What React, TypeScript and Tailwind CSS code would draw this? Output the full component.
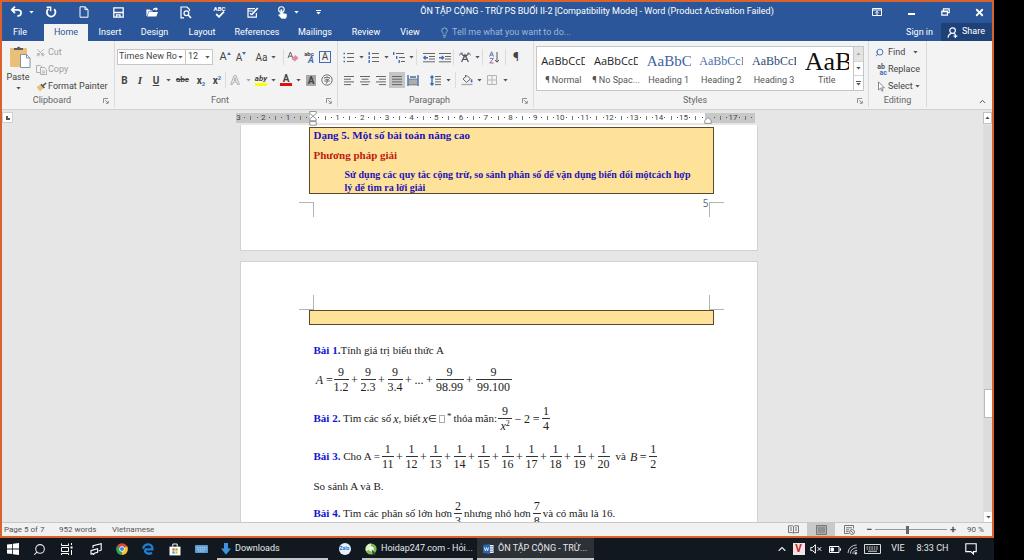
import React from "react";
import { ChevronUp, Search, Scissors, Lightbulb, X } from "lucide-react";

type Kids = { children?: React.ReactNode };

/* ---------- small building blocks ---------- */

function Caret({ className = "text-[#555]" }: { className?: string }) {
  return (
    <svg viewBox="0 0 5 3" className={`h-[3px] w-[5px] shrink-0 ${className}`} fill="currentColor" aria-hidden="true">
      <path d="M0.3 0H4.7L2.5 2.6Z" />
    </svg>
  );
}

function Cell({ w, label, children, on = false }: Kids & { w: string; label: string; on?: boolean }) {
  return (
    <button
      type="button"
      aria-label={label}
      className={`flex h-4 shrink-0 items-center justify-center ${w} ${on ? "bg-[#c5c5c5]" : ""}`}
    >
      {children}
    </button>
  );
}

function Rule() {
  return <span className="h-4 w-px shrink-0 bg-[#dcdcdc]" />;
}

function Group({ title, w, launcher = true, children }: Kids & { title: string; w: string; launcher?: boolean }) {
  return (
    <section aria-label={title} className={`flex shrink-0 flex-col border-r border-[#dadada] ${w}`}>
      <div className="h-[54px]">{children}</div>
      <div className="flex h-3 items-center">
        <span className="flex-1 text-center text-[#666]">{title}</span>
        {launcher ? (
          <button type="button" aria-label={`${title} settings`} className="mr-1 flex h-2 w-2 items-center justify-center">
            <svg viewBox="0 0 6 6" className="h-[6px] w-[6px]" fill="none" stroke="#777" strokeWidth="0.8">
              <path d="M0.5 5V0.5H5M2.2 2.2L5 5M5.3 2.8V5.3H2.8" />
            </svg>
          </button>
        ) : null}
      </div>
    </section>
  );
}

/* ---------- title bar ---------- */

function TitleBar() {
  return (
    <header className="flex h-5 items-center bg-[#2b579a] text-white">
      <div className="flex items-center">
        <button type="button" aria-label="Undo" className="flex w-[32px] items-center gap-1.5 pl-2">
          <svg viewBox="0 0 13 12" className="h-3 w-[13px] shrink-0" fill="none" stroke="#fff" strokeWidth="1.8">
            <path d="M5 0.6L1.8 3.8L5 7M2 3.8H8C12.4 4 12 10 7.4 10" />
          </svg>
          <Caret className="text-white" />
        </button>
        <button type="button" aria-label="Repeat" className="flex w-[33px] items-center justify-center">
          <svg viewBox="0 0 12 12" className="h-3 w-3" fill="none" stroke="#fff" strokeWidth="1.8">
            <path d="M9.2 3.2A4.3 4.3 0 1 1 3.6 2.8" />
            <path d="M1.6 1.2H5.6V5.2" strokeWidth="1.5" />
          </svg>
        </button>
        <button type="button" aria-label="New" className="flex w-[34px] items-center justify-center">
          <svg viewBox="0 0 10 12" className="h-3 w-[10px]" fill="none" stroke="#fff" strokeWidth="1">
            <path d="M1 0.8H6L9 3.6V11.2H1ZM6 0.8V3.6H9" />
          </svg>
        </button>
        <button type="button" aria-label="Save" className="flex w-[34px] items-center justify-center">
          <svg viewBox="0 0 11 11" className="h-[11px] w-[11px]" fill="none" stroke="#fff" strokeWidth="1.3">
            <path d="M0.8 0.8H10.2V10.2H0.8ZM0.8 5.5H10.2M3.5 10V7.8H7V10" />
          </svg>
        </button>
        <button type="button" aria-label="Open" className="flex w-[34px] items-center justify-center">
          <svg viewBox="0 0 12 10" className="h-[10px] w-3" fill="#fff">
            <path d="M0.4 9V2.4H3.6L4.6 3.4H6.4V4.4H2.4L0.8 9ZM2.8 5H12L10.4 9.6H1.2ZM7 2.2C7.6 1 8.8 0.8 9.8 1.2V0L12 2L9.8 4V2.8C8.8 2.4 8 2.6 7 3.2Z" />
          </svg>
        </button>
        <button type="button" aria-label="Print preview" className="flex w-[34px] items-center justify-center">
          <svg viewBox="0 0 12 13" className="h-[13px] w-3" fill="none" stroke="#fff" strokeWidth="1.2">
            <path d="M4 11.8H1V1H7L9.5 3.5V5" />
            <circle cx="6.4" cy="7.2" r="2.4" />
            <path d="M8.2 9L11 12" strokeWidth="1.6" />
          </svg>
        </button>
        <button type="button" aria-label="Spelling" className="flex w-[33px] flex-col items-center justify-center">
          <span className="text-[6px] leading-[5px] font-bold">ABC</span>
          <svg viewBox="0 0 10 7" className="h-[7px] w-[10px]" fill="none" stroke="#fff" strokeWidth="1.8">
            <path d="M1.2 3L4 5.8L9 0.6" />
          </svg>
        </button>
        <button type="button" aria-label="Edit" className="flex w-[33px] items-center justify-center">
          <svg viewBox="0 0 12 11" className="h-[11px] w-3" fill="none" stroke="#fff" strokeWidth="1.2">
            <path d="M8 1.6H1V10.2H9.4V6M1 4H6M3 6L4.4 7.8" />
            <path d="M4.4 8L10.8 1" strokeWidth="1.8" />
          </svg>
        </button>
        <button type="button" aria-label="Touch mode" className="flex w-[34px] items-center justify-end gap-1.5 pr-1">
          <svg viewBox="0 0 11 13" className="h-[13px] w-[11px] shrink-0" fill="none" stroke="#fff">
            <circle cx="4.4" cy="3.6" r="2.8" strokeWidth="1.1" />
            <path d="M4.4 3.4V9" strokeWidth="1.9" />
            <path d="M3.6 6.6L9.6 8.2V10.6L8.6 12.6H4.6L1.4 9L2.4 8.2L3.6 9Z" fill="#fff" strokeWidth="0.4" />
          </svg>
          <Caret className="text-white" />
        </button>
        <button type="button" aria-label="Customize toolbar" className="flex w-[27px] flex-col items-center gap-px pl-1">
          <span className="h-px w-[5px] bg-white" />
          <Caret className="text-white" />
        </button>
      </div>
      <h1 className="min-w-0 flex-1 truncate text-center text-[9px]">
        ÔN TẬP CỘNG - TRỪ PS BUỔI II-2 [Compatibility Mode] - Word (Product Activation Failed)
      </h1>
      <div className="flex gap-2">
        <button type="button" aria-label="Ribbon display options" className="flex w-[26px] items-center justify-center">
          <svg viewBox="0 0 10 8" className="h-2 w-[10px]" fill="none" stroke="#fff" strokeWidth="1">
            <path d="M0.5 0.5H9.5V7.5H0.5ZM0.5 2H9.5M5 7V3.6M3.3 5L5 3.4L6.7 5" />
          </svg>
        </button>
        <button type="button" aria-label="Minimize" className="flex w-[26px] items-center justify-center">
          <span className="mt-1 h-[2px] w-[7px] bg-white" />
        </button>
        <button type="button" aria-label="Restore" className="flex w-[26px] items-center justify-center">
          <svg viewBox="0 0 9 8" className="h-2 w-[9px]" fill="none" stroke="#fff" strokeWidth="1.2">
            <path d="M2.5 2.6V0.8H8.2V4.6H6.6M0.8 3H6.4V7.2H0.8ZM0.8 3.6H6.4" />
          </svg>
        </button>
        <button type="button" aria-label="Close" className="flex w-[26px] items-center justify-center">
          <X size={11} strokeWidth={4} />
        </button>
      </div>
    </header>
  );
}

const tabs = [
  { name: "File", w: "mr-1.5 w-9" },
  { name: "Home", w: "w-11" },
  { name: "Insert", w: "w-11" },
  { name: "Design", w: "w-[45px]" },
  { name: "Layout", w: "w-[50px]" },
  { name: "References", w: "w-[60px]" },
  { name: "Mailings", w: "w-14" },
  { name: "Review", w: "w-[46px]" },
  { name: "View", w: "w-[42px]" },
];

function TabRow() {
  return (
    <nav className="flex h-[19px] items-stretch bg-[#2b579a] pt-0.5 text-[9px] text-white">
      {tabs.map((t) => (
        <button
          key={t.name}
          type="button"
          className={`${t.w} shrink-0 ${t.name === "Home" ? "bg-[#f3f3f3] text-[#2b579a]" : ""}`}
        >
          {t.name}
        </button>
      ))}
      <label className="flex flex-1 items-center gap-0.5 pl-2 text-[#9fb6db]">
        <Lightbulb size={11} strokeWidth={2} />
        <input
          aria-label="Tell me what you want to do"
          placeholder="Tell me what you want to do..."
          className="w-40 bg-transparent outline-none placeholder:text-[#9fb6db]"
        />
      </label>
      <button type="button" className="px-2">Sign in</button>
      <button type="button" className="-mt-px flex w-[51px] items-center gap-1 bg-[#1e4278] pl-1.5">
        <svg viewBox="0 0 11 11" className="h-[11px] w-[11px]" fill="none" stroke="#fff" strokeWidth="1.2">
          <circle cx="5.6" cy="3.6" r="2.8" />
          <path d="M1 10.6C1.2 8 2.6 6.8 4.4 6.2M7 6.6L8.4 7.6M8.4 7.4V11M6.6 9.2H10.4" />
        </svg>
        Share
      </button>
    </nav>
  );
}

/* ---------- ribbon ---------- */

function Clipboard() {
  return (
    <Group title="Clipboard" w="w-[113px]">
      <div className="flex">
        <button type="button" className="flex w-8 flex-col items-center pt-1">
          <svg viewBox="0 0 22 24" className="ml-1 h-6 w-[22px]">
            <rect x="1" y="3" width="17" height="19" rx="1" fill="#eac079" />
            <path d="M5 5V3H8A1.8 1.8 0 0 1 11.4 3H14V5Z" fill="#5c5c5c" />
            <path d="M11.5 9.5H17.5L21 13V22.5H11.5Z" fill="#fff" stroke="#8492a6" />
            <path d="M17.5 9.5V13H21" fill="none" stroke="#8492a6" />
          </svg>
          <span className="mt-0.5 leading-3">Paste</span>
          <span className="mt-1"><Caret /></span>
        </button>
        <div className="flex flex-col pt-[3px] pl-0.5">
          <button type="button" className="flex h-[17px] items-center gap-[3px] text-[#a0a0a0]">
            <Scissors size={9} className="-rotate-90" strokeWidth={2} />
            Cut
          </button>
          <button type="button" className="flex h-[17px] items-center gap-px text-[#a0a0a0]">
            <svg viewBox="0 0 11 10" className="h-[10px] w-[11px]" fill="#f3f3f3" stroke="#b0b0b0" strokeWidth="1">
              <path d="M0.5 0.5H4.5L6.5 2.5V7.5H0.5Z" />
              <path d="M4.5 2.5H8.5L10.5 4.5V9.5H4.5ZM6 6H9M6 7.8H9" />
            </svg>
            Copy
          </button>
          <button type="button" className="flex h-[17px] items-center gap-px whitespace-nowrap">
            <svg viewBox="0 0 11 10" className="h-[10px] w-[11px] shrink-0">
              <path d="M0.5 5L4.5 2.5L7.5 6L4 9.6Z" fill="#eac079" />
              <path d="M5 2.2L8.4 6M7.2 3.4L10.2 1" stroke="#555" strokeWidth="1.6" />
            </svg>
            Format Painter
          </button>
        </div>
      </div>
    </Group>
  );
}

function FontGroup() {
  return (
    <Group title="Font" w="w-[223px]">
      <div className="flex flex-col gap-[7px] pt-2 pl-0.5">
        <div className="flex h-4 items-center">
          <div className="relative flex h-4 w-[69px] items-center border border-[#c6c6c6] bg-white">
            <select aria-label="Font family" className="w-full appearance-none bg-transparent pl-px outline-none">
              <option>Times New Ro</option>
            </select>
            <span className="pointer-events-none absolute right-0.5"><Caret /></span>
          </div>
          <div className="relative -ml-px flex h-4 w-7 items-center border border-[#c6c6c6] bg-white">
            <select aria-label="Font size" className="w-full appearance-none bg-transparent pl-0.5 outline-none">
              <option>12</option>
            </select>
            <span className="pointer-events-none absolute right-0.5"><Caret /></span>
          </div>
          <Cell w="ml-1 w-4" label="Grow font">
            <span className="text-[11px]">A</span>
            <svg viewBox="0 0 4 3" className="mb-2 h-[3px] w-1" fill="#3f6db3"><path d="M0 3L2 0L4 3Z" /></svg>
          </Cell>
          <Cell w="w-4" label="Shrink font">
            <span className="text-[10px]">A</span>
            <svg viewBox="0 0 4 3" className="mb-2 h-[3px] w-1" fill="#3f6db3"><path d="M0 0L2 3L4 0Z" /></svg>
          </Cell>
          <Cell w="w-[34px] gap-1" label="Change case">
            <span className="text-[10px]">Aa</span>
            <Caret />
          </Cell>
          <Rule />
          <Cell w="w-[17px]" label="Clear formatting">
            <svg viewBox="0 0 12 12" className="h-3 w-3">
              <path d="M1 7L3.4 1L5.8 7M1.8 5.2H5" fill="none" stroke="#555" strokeWidth="0.9" />
              <path d="M4.5 8L8.5 4L11.5 7L8 10.6Z" fill="#e28a9c" />
            </svg>
          </Cell>
          <Cell w="w-4" label="Phonetic guide">
            <span className="flex flex-col items-center">
              <span className="text-[6px] leading-[5px] font-bold">abc</span>
              <span className="pl-1 text-[9px] leading-[8px] font-bold text-[#3f6db3] italic">A</span>
            </span>
          </Cell>
          <Cell w="w-4" label="Character border">
            <span className="flex h-3 w-3 items-center justify-center border border-[#3f6db3] text-[10px] leading-none">A</span>
          </Cell>
        </div>
        <div className="flex h-4 items-center text-[10px] font-bold">
          <Cell w="w-[15px]" label="Bold">B</Cell>
          <Cell w="w-4" label="Italic"><span className="font-['Liberation_Serif',serif] text-[11px] italic">I</span></Cell>
          <Cell w="w-4" label="Underline"><span className="underline">U</span></Cell>
          <Cell w="w-2" label="Underline style"><Caret /></Cell>
          <Cell w="w-[21px]" label="Strikethrough"><span className="text-[8px] line-through">abc</span></Cell>
          <Cell w="w-4" label="Subscript">x<span className="mt-1.5 text-[6px] text-[#3f6db3]">2</span></Cell>
          <Cell w="w-4" label="Superscript">x<span className="mb-1.5 text-[6px] text-[#3f6db3]">2</span></Cell>
          <Rule />
          <Cell w="ml-0.5 w-[25px] gap-1.5" label="Text effects">
            <svg viewBox="0 0 10 10" className="h-[10px] w-[10px]" fill="none" stroke="#b0b0b0" strokeWidth="1">
              <path d="M0.6 9.4L4 0.6H6L9.4 9.4H7.4L6.6 7H3.4L2.6 9.4ZM4 5.4H6L5 2.6Z" />
            </svg>
            <Caret className="text-[#aaa]" />
          </Cell>
          <Cell w="w-[25px] gap-1" label="Highlight colour">
            <span className="flex flex-col items-center border-b-[3px] border-[#ffff00]">
              <span className="text-[8px] leading-[8px] italic">aby</span>
            </span>
            <Caret />
          </Cell>
          <Cell w="w-[25px] gap-1" label="Font colour">
            <span className="flex w-3 justify-center border-b-[3px] border-[#e01010] text-[10px] leading-[9px]">A</span>
            <Caret />
          </Cell>
          <Cell w="w-4" label="Character shading"><span className="bg-[#a8a8a8] px-0.5 leading-[11px]">A</span></Cell>
          <Cell w="w-4" label="Enclose characters">
            <svg viewBox="0 0 12 12" className="h-3 w-3" fill="none" stroke="#666" strokeWidth="0.9">
              <circle cx="6" cy="6" r="5.2" />
              <path d="M6 2.2V3.4M3.4 4.6V3.6H8.6V4.6M4.2 5.4H7.6L6 6.6V9L5 9.2M3.2 7H8.8" />
            </svg>
          </Cell>
        </div>
      </div>
    </Group>
  );
}

function Lines({ d, accent }: { d: string; accent?: string }) {
  return (
    <svg viewBox="0 0 12 11" className="h-[11px] w-3 shrink-0" fill="none" strokeWidth="1">
      <path d={d} stroke="#666" />
      {accent ? <path d={accent} stroke="#3f6db3" strokeWidth="1.4" /> : null}
    </svg>
  );
}

function Paragraph() {
  return (
    <Group title="Paragraph" w="w-[196px]">
      <div className="flex flex-col gap-[7px] pt-2 pl-[3px]">
        <div className="flex h-4 items-center">
          <Cell w="w-[25px] gap-1" label="Bullets">
            <Lines d="M4 1.5H11M4 5.5H11M4 9.5H11" accent="M0.5 1.5H2M0.5 5.5H2M0.5 9.5H2" />
            <Caret />
          </Cell>
          <Cell w="w-[25px] gap-1" label="Numbering">
            <Lines d="M4 1.5H11M4 5.5H11M4 9.5H11" accent="M1.2 0V3M1.2 4V7M1.2 8V11" />
            <Caret />
          </Cell>
          <Cell w="w-[25px] gap-1" label="Multilevel list">
            <Lines d="M3 1.5H11M6 5.5H12M8 9.5H12" accent="M0.7 0V3M3.7 4V7M6.2 8V11" />
            <Caret />
          </Cell>
          <Rule />
          <Cell w="ml-1 w-4" label="Decrease indent">
            <Lines d="M0 1.5H12M6 4.5H12M6 7H12M0 9.8H12" accent="M5 5.7H1M2.6 4L0.9 5.7L2.6 7.4" />
          </Cell>
          <Cell w="w-4" label="Increase indent">
            <Lines d="M0 1.5H12M6 4.5H12M6 7H12M0 9.8H12" accent="M0 5.7H4.4M2.8 4L4.5 5.7L2.8 7.4" />
          </Cell>
          <Rule />
          <Cell w="ml-0.5 w-[26px] gap-1" label="Asian layout">
            <svg viewBox="0 0 12 11" className="h-[11px] w-3" fill="none" stroke="#555" strokeWidth="1.2">
              <path d="M2.6 10L6 2.6L9.4 10M3.8 7.4H8.2M6 5L2 1.4M6 5L10 1.4" />
              <path d="M0.4 3.6L1.6 1L4 1.2M11.6 3.6L10.4 1L8 1.2" strokeWidth="0.8" stroke="#3f6db3" />
            </svg>
            <Caret />
          </Cell>
          <Rule />
          <Cell w="w-[22px]" label="Sort">
            <svg viewBox="0 0 10 13" className="h-[13px] w-[10px]" fill="none">
              <path d="M0.6 5.6L2.6 0.8L4.6 5.6M1.4 4H3.8" stroke="#3f6db3" strokeWidth="0.9" />
              <path d="M0.8 7.4H4.4L0.8 12H4.6" stroke="#8b5aa8" strokeWidth="0.9" />
              <path d="M8 1V11M6 9L8 11.2L10 9" stroke="#555" />
            </svg>
          </Cell>
          <Rule />
          <Cell w="w-5" label="Show marks"><span className="text-[12px]">¶</span></Cell>
        </div>
        <div className="flex h-4 items-center">
          <Cell w="w-4" label="Align left"><Lines d="M1 1.5H11M1 4.2H8M1 6.9H11M1 9.6H8" /></Cell>
          <Cell w="w-4" label="Align centre"><Lines d="M1 1.5H11M2.5 4.2H9.5M1 6.9H11M2.5 9.6H9.5" /></Cell>
          <Cell w="w-4" label="Align right"><Lines d="M1 1.5H11M4 4.2H11M1 6.9H11M4 9.6H11" /></Cell>
          <Cell w="w-4" label="Justify" on><Lines d="M1 1.5H11M1 4.2H11M1 6.9H11M1 9.6H11" /></Cell>
          <Cell w="w-4" label="Distribute">
            <Lines d="M1.5 4.2H10.5M1.5 6H10.5M1.5 8H10.5M1.5 9.8H10.5" accent="M1 0V11M11 0V11M3 2H9" />
          </Cell>
          <span className="ml-1"><Rule /></span>
          <Cell w="w-[30px] gap-1" label="Line spacing">
            <Lines d="M5 1.5H11M5 4.2H11M5 6.9H11M5 9.6H11" accent="M2 1V10M0.5 2.8L2 1L3.5 2.8M0.5 8.2L2 10L3.5 8.2" />
            <Caret />
          </Cell>
          <Rule />
          <Cell w="ml-0.5 w-[26px] gap-1" label="Shading">
            <svg viewBox="0 0 12 12" className="h-3 w-3" fill="none" stroke="#666">
              <path d="M2 5L6 1.5L9.5 5L5.5 8.4ZM4.5 3V1" />
              <path d="M10.6 5.4V8.4" stroke="#3f6db3" strokeWidth="1.6" />
              <path d="M0.5 10.5H11.5" strokeWidth="1.4" stroke="#aaa" />
            </svg>
            <Caret />
          </Cell>
          <Cell w="w-[26px] gap-1.5" label="Borders">
            <svg viewBox="0 0 10 10" className="h-[10px] w-[10px]" fill="none" stroke="#b5b5b5">
              <path d="M0.5 0.5H9.5V9.5H0.5ZM5 0.5V9.5M0.5 5H9.5" />
            </svg>
            <Caret />
          </Cell>
        </div>
      </div>
    </Group>
  );
}

const styleItems = [
  { name: "¶ Normal", sample: "AaBbCcD", look: "font-['Open_Sans',sans-serif] text-[11px] text-[#222]" },
  { name: "¶ No Spac...", sample: "AaBbCcD", look: "font-['Open_Sans',sans-serif] text-[11px] text-[#222]" },
  { name: "Heading 1", sample: "AaBbC", look: "font-['Liberation_Serif',serif] text-[15px] text-[#3c62a0]" },
  { name: "Heading 2", sample: "AaBbCcI", look: "font-['Liberation_Serif',serif] text-[12px] text-[#4a6fa8]" },
  { name: "Heading 3", sample: "AaBbCcI", look: "font-['Liberation_Serif',serif] text-[12px] text-[#2c4874]" },
  { name: "Title", sample: "AaB", look: "font-['Liberation_Serif',serif] text-[26px] text-[#111]" },
];

function Styles() {
  return (
    <Group title="Styles" w="w-[335px]">
      <div className="flex h-[50px] pt-[5px] pr-1 pl-0.5">
        <div className="flex min-w-0 flex-1 border border-[#c6c6c6] bg-white">
          {styleItems.map((s) => (
            <button key={s.name} type="button" className="flex min-w-0 flex-1 flex-col items-center overflow-hidden pt-[3px]">
              <span className={`flex h-[22px] w-11 items-center overflow-hidden whitespace-nowrap ${s.look}`}>{s.sample}</span>
              <span className="mt-0.5 whitespace-nowrap text-[#555]">{s.name}</span>
            </button>
          ))}
          <div className="flex w-[10px] flex-col border-l border-[#c6c6c6]">
            <button type="button" aria-label="Previous styles" className="flex flex-1 items-center justify-center bg-[#e4e4e4]">
              <span className="rotate-180"><Caret className="text-[#aaa]" /></span>
            </button>
            <button type="button" aria-label="Next styles" className="flex flex-1 items-center justify-center border-y border-[#d5d5d5]">
              <Caret />
            </button>
            <button type="button" aria-label="More styles" className="flex flex-1 flex-col items-center justify-center gap-px">
              <span className="h-px w-[5px] bg-[#555]" />
              <Caret />
            </button>
          </div>
        </div>
      </div>
    </Group>
  );
}

function Editing() {
  return (
    <Group title="Editing" w="w-[58px]" launcher={false}>
      <div className="flex flex-col pt-[3px] pl-1.5">
        <button type="button" className="flex h-[17px] items-center gap-1">
          <Search size={9} className="-scale-x-100 text-[#3f6db3]" strokeWidth={2.5} />
          <span>Find</span>
          <span className="ml-1"><Caret /></span>
        </button>
        <button type="button" className="flex h-[17px] items-center gap-px">
          <span className="flex w-3 flex-col text-[7px] leading-[6px] font-bold">
            <span className="text-[#555]">ab</span>
            <span className="text-right text-[#3f6db3]">ac</span>
          </span>
          Replace
        </button>
        <button type="button" className="flex h-[17px] items-center gap-px">
          <svg viewBox="0 0 11 11" className="h-[11px] w-3 shrink-0" fill="#fff" stroke="#888">
            <path d="M3 0.8V9L5 7.2L6.4 10.2L7.6 9.6L6.2 6.8H8.8Z" />
          </svg>
          <span className="mr-px">Select</span>
          <Caret />
        </button>
      </div>
    </Group>
  );
}

/* ---------- ruler ---------- */

function Ruler() {
  const marks = Array.from({ length: 21 }, (_, i) => i - 3);
  return (
    <div className="flex h-[15px] items-center bg-[#e6e6e6]">
      <div className="flex h-[11px] w-[11px] items-center justify-center border border-[#cfcfcf] bg-white">
        <span className="h-1 w-1 border-b-2 border-l-2 border-[#555]" />
      </div>
      <div className="flex flex-1 justify-center pr-1.5">
        <div className="relative flex h-[10px] w-[519px] text-[8px] leading-[10px] text-[#444]">
          {marks.map((n) => (
            <div key={n} className={`flex min-w-0 flex-1 items-center ${n < 0 || n > 15 ? "bg-[#c8c8c8]" : "bg-white"}`}>
              <span className="flex w-1/4 justify-center whitespace-nowrap">{n === 0 || n === 16 ? "" : Math.abs(n)}</span>
              <span className="flex w-1/4 justify-center"><span className="h-px w-px bg-[#555]" /></span>
              <span className="flex w-1/4 justify-center"><span className="h-1 w-px bg-[#777]" /></span>
              <span className="flex w-1/4 justify-center"><span className="h-px w-px bg-[#555]" /></span>
            </div>
          ))}
          <svg viewBox="0 0 8 15" className="absolute -top-0.5 left-[73px] h-[15px] w-2" fill="#fff" stroke="#888" strokeWidth="0.9">
            <path d="M0.8 0.5H7.2V2.5L4 5.2L0.8 2.5ZM4 5.2L7.2 8V9.8H0.8V8ZM0.8 10.6H7.2V14.2H0.8Z" />
          </svg>
          <svg viewBox="0 0 8 7" className="absolute top-1 right-[43px] h-[7px] w-2" fill="#fff" stroke="#888" strokeWidth="0.9">
            <path d="M4 0.6L7.2 3.4V6.4H0.8V3.4Z" />
          </svg>
        </div>
      </div>
      <div className="flex h-3 w-[9px] items-center justify-center border border-[#c0c0c0] bg-white">
        <span className="rotate-180"><Caret /></span>
      </div>
    </div>
  );
}

/* ---------- document ---------- */

function Frac({ n, d, w = "" }: { n: React.ReactNode; d: React.ReactNode; w?: string }) {
  return (
    <span className={`inline-flex shrink-0 flex-col items-center text-[12px] leading-[14px] ${w}`}>
      <span>{n}</span>
      <span className="h-px w-full bg-[#333]" />
      <span>{d}</span>
    </span>
  );
}

function Op({ children }: Kids) {
  return <span className="w-3 shrink-0 text-center text-[12px]">{children}</span>;
}

function Term({ children }: Kids) {
  return <b className="text-[#1414d0]">{children}</b>;
}

function CropMarks({ side }: { side: "top" | "bottom" }) {
  const edge = side === "top" ? "border-b" : "border-t";
  return (
    <div className="flex h-[15px] justify-between pr-[33px] pl-[58px]">
      <span className={`w-[15px] border-r border-[#b4b4b4] ${edge}`} />
      <span className={`w-[15px] border-l border-[#b4b4b4] ${edge}`} />
    </div>
  );
}

const denominators = [11, 12, 13, 14, 15, 16, 17, 18, 19, 20];

function Document() {
  return (
    <main className="flex min-h-0 flex-1 bg-[#e6e6e6]">
      <div className="w-3 shrink-0" />
      <div className="flex min-w-0 flex-1 flex-col items-center gap-[10px] overflow-hidden font-['Liberation_Serif',serif] text-[11px] whitespace-nowrap text-[#222]">
        <article className="flex h-[126px] w-[518px] shrink-0 flex-col border border-t-0 border-[#d2d2d2] bg-white pt-0.5">
          <div className="mr-[43px] ml-[68px] h-[67px] border border-[#5a4a28] bg-[#ffe29a] pl-1 font-bold text-[#1d13b8]">
            <p className="leading-[14px]">Dạng 5. Một số bài toán nâng cao</p>
            <p className="mt-1.5 leading-[14px] text-[#bf1a10]">Phương pháp giải</p>
            <p className="mt-1.5 pl-[31px] text-[10px] leading-[13px]">
              Sử dụng các quy tắc cộng trừ, so sánh phân số để vận dụng biến đổi mộtcách hợp
              <br />
              lý để tìm ra lời giải
            </p>
          </div>
          <div className="relative pt-2">
            <CropMarks side="bottom" />
            <span className="absolute top-0.5 right-12 font-['Open_Sans',sans-serif] text-[10px] text-[#5b6472]">5</span>
          </div>
        </article>
        <article className="w-[518px] shrink-0 border border-[#d2d2d2] bg-white pt-[33px]">
          <CropMarks side="top" />
          <div className="mr-[43px] ml-[68px] h-[15px] border border-[#5a4a28] bg-[#ffe29a]" />
          <div className="pt-[18px] pl-[73px]">
            <p className="leading-[14px]"><Term>Bài 1.</Term>Tính giá trị biểu thức A</p>
            <div className="mt-2 flex items-center">
              <i className="w-3 text-center text-[12px]">A</i>
              <span className="w-2 text-center text-[12px]">=</span>
              <Frac n="9" d="1.2" />
              <Op>+</Op>
              <Frac n="9" d="2.3" />
              <Op>+</Op>
              <Frac n="9" d="3.4" />
              <Op>+</Op>
              <span className="text-[12px]">...</span>
              <Op>+</Op>
              <Frac n="9" d="98.99" w="w-7" />
              <Op>+</Op>
              <Frac n="9" d="99.100" w="w-9" />
            </div>
            <div className="mt-[10px] flex items-center">
              <span><Term>Bài 2.</Term> Tìm các số</span>
              <i className="ml-0.5 text-[12px]">x</i>
              <span>, biết</span>
              <i className="ml-0.5 text-[12px]">x</i>
              <span className="text-[10px]">∈</span>
              <span className="ml-0.5 h-2 w-1.5 border border-[#aaa]" />
              <span className="mb-1 ml-0.5 text-[9px]">*</span>
              <span className="mr-px ml-0.5">thỏa mãn:</span>
              <Frac n="9" d={<i>x<sup className="text-[8px] not-italic">2</sup></i>} w="w-[14px]" />
              <Op>−</Op>
              <span className="text-[12px]">2</span>
              <Op>=</Op>
              <Frac n="1" d="4" w="w-2" />
            </div>
            <div className="mt-[9px] flex items-center">
              <span className="mr-0.5"><Term>Bài 3.</Term> Cho A =</span>
              {denominators.map((d, i) => (
                <React.Fragment key={d}>
                  {i > 0 ? <Op>+</Op> : null}
                  <Frac n="1" d={d} />
                </React.Fragment>
              ))}
              <span className="ml-1.5">và</span>
              <i className="ml-1 text-[12px]">B</i>
              <Op>=</Op>
              <Frac n="1" d="2" w="w-2" />
            </div>
            <p className="mt-2 leading-[14px]">So sánh A và B.</p>
            <div className="mt-[5px] flex items-center">
              <span><Term>Bài 4.</Term> Tìm các phân số lớn hơn</span>
              <span className="mx-0.5"><Frac n="2" d="3" w="w-2" /></span>
              <span>nhưng nhỏ hơn</span>
              <span className="mx-0.5"><Frac n="7" d="8" w="w-2" /></span>
              <span>và có mẫu là 16.</span>
            </div>
          </div>
        </article>
      </div>
      <div className="flex w-[9px] shrink-0 flex-col border-l border-[#ddd] bg-[#dadddc]">
        <div className="flex-[265]" />
        <div className="h-[29px] border border-r-0 border-[#bbb] bg-white" />
        <div className="flex-[94]" />
        <div className="flex h-[10px] items-center justify-center bg-white"><Caret /></div>
      </div>
    </main>
  );
}

function StatusBar() {
  return (
    <footer className="flex h-[14px] items-center border-t border-[#c8c8c8] bg-[#f1f1f1] pl-0.5 text-[8px] text-[#555]">
      <span className="w-[55px]">Page 5 of 7</span>
      <span className="w-[53px]">952 words</span>
      <span className="flex-1">Vietnamese</span>
      <button type="button" aria-label="Read mode" className="flex w-7 justify-center">
        <svg viewBox="0 0 11 9" className="h-[9px] w-[11px]" fill="none" stroke="#777">
          <path d="M0.5 0.8H4.5L5.5 1.6L6.5 0.8H10.5V7.6H6.5L5.5 8.4L4.5 7.6H0.5ZM5.5 1.6V8M2 3H4M2 5H4M7 3H9M7 5H9" />
        </svg>
      </button>
      <button type="button" aria-label="Print layout" className="flex h-[13px] w-7 items-center justify-center bg-[#c9c9c9]">
        <svg viewBox="0 0 11 10" className="h-[10px] w-[11px]" fill="#aaa" stroke="#777">
          <path d="M0.5 0.5H10.5V9.5H0.5ZM2 3H9M2 5H9M2 7H9" />
        </svg>
      </button>
      <button type="button" aria-label="Web layout" className="flex w-7 justify-center">
        <svg viewBox="0 0 11 10" className="h-[10px] w-[11px]" fill="none" stroke="#777">
          <path d="M5 8.5H0.5V0.5H9.5V3.5M2 2.8H8M2 4.8H5M2 6.6H4.6" />
          <circle cx="8" cy="7" r="2.4" />
          <path d="M6.4 5.4L9.6 8.6" />
        </svg>
      </button>
      <button type="button" aria-label="Zoom out" className="w-3 text-[11px] leading-none font-bold">−</button>
      <input
        type="range"
        aria-label="Zoom"
        min={10}
        max={170}
        defaultValue={82}
        className="h-2 w-[72px] appearance-none bg-[linear-gradient(#999,#999)] bg-[length:100%_1px] bg-center bg-no-repeat [&::-webkit-slider-thumb]:h-2 [&::-webkit-slider-thumb]:w-[3px] [&::-webkit-slider-thumb]:appearance-none [&::-webkit-slider-thumb]:bg-[#666]"
      />
      <button type="button" aria-label="Zoom in" className="w-3 text-[11px] leading-none font-bold">+</button>
      <span className="w-[33px] pl-2">90 %</span>
    </footer>
  );
}

/* ---------- taskbar ---------- */

function TaskIcon({ label, children }: Kids & { label: string }) {
  return (
    <button type="button" aria-label={label} className="flex w-[27px] shrink-0 items-center justify-center">
      {children}
    </button>
  );
}

function Taskbar() {
  return (
    <div className="flex h-[22px] shrink-0 items-stretch bg-[#111820] text-[9px] text-[#e8e8e8]">
      <div className="-ml-px flex items-stretch">
        <TaskIcon label="Start">
          <svg viewBox="0 0 12 12" className="h-3 w-3" fill="#fff">
            <path d="M0 1.6L5.2 0.9V5.6H0ZM6 0.8L12 0V5.6H6ZM0 6.4H5.2V11.1L0 10.4ZM6 6.4H12V12L6 11.2Z" />
          </svg>
        </TaskIcon>
        <TaskIcon label="Search"><Search size={13} className="-scale-x-100" strokeWidth={2} /></TaskIcon>
        <TaskIcon label="Task view">
          <svg viewBox="0 0 12 12" className="h-3 w-3" fill="none" stroke="#fff">
            <path d="M0.5 0.5V2.5H7.5V0.5M0.5 4.5H7.5V8.5H0.5ZM0.5 12V10.5H7.5V12M10.5 0V2M10.5 7V12" />
            <path d="M10.5 3.4V5.6" strokeWidth="2" />
          </svg>
        </TaskIcon>
        <TaskIcon label="Connect">
          <svg viewBox="0 0 12 12" className="ml-1 h-3 w-3" fill="none" stroke="#fff" strokeWidth="1.1">
            <path d="M3 5V2.6L11.2 0.8V7.2L8.6 8" />
            <path d="M1 7.6L7.6 5.8V9.4L4.4 10.2L3.6 11.6L2.8 10.6L1 11Z" />
          </svg>
        </TaskIcon>
        <TaskIcon label="Chrome">
          <svg viewBox="0 0 12 12" className="ml-0.5 h-3 w-3">
            <path d="M6 6L0.9 3A6 6 0 0 1 11.1 3Z" fill="#e04636" />
            <path d="M6 6L11.1 3A6 6 0 0 1 6 12Z" fill="#f7c52b" />
            <path d="M6 6V12A6 6 0 0 1 0.9 3Z" fill="#35a351" />
            <circle cx="6" cy="6" r="2.7" fill="#fff" />
            <circle cx="6" cy="6" r="2.1" fill="#4285f4" />
          </svg>
        </TaskIcon>
        <TaskIcon label="Edge">
          <svg viewBox="0 0 12 12" className="h-3 w-3" fill="none" stroke="#1f80d8" strokeWidth="2.3">
            <path d="M3 6.4H10.4C10.6 2.8 8.6 1.4 6.3 1.4C3.6 1.4 1.6 3.4 1 5.6M2.9 6.4C2.7 10.8 7.4 11.6 10 9.8" />
          </svg>
        </TaskIcon>
        <TaskIcon label="Store">
          <svg viewBox="0 0 12 13" className="h-[13px] w-3">
            <path d="M0.5 3.6H11.5V12.4H0.5Z" fill="#fff" />
            <path d="M3.8 3.6V1H8.2V3.6" fill="none" stroke="#fff" />
            <path d="M3.4 5.4H5.6V7.6H3.4Z" fill="#e8502a" />
            <path d="M6.4 5.4H8.6V7.6H6.4Z" fill="#7ab51d" />
            <path d="M3.4 8.4H5.6V10.6H3.4Z" fill="#2a9ce0" />
            <path d="M6.4 8.4H8.6V10.6H6.4Z" fill="#f5b81e" />
          </svg>
        </TaskIcon>
        <TaskIcon label="Keyboard">
          <svg viewBox="0 0 13 8" className="h-2 w-[13px]">
            <rect width="13" height="8" rx="0.8" fill="#5b9bd0" />
            <path d="M1.5 2.4H11.5M1.5 4.2H11.5M3 6H10" stroke="#cfe4f5" strokeWidth="0.8" strokeDasharray="1.2 0.6" />
          </svg>
        </TaskIcon>
      </div>
      <button type="button" className="ml-0.5 flex w-[111px] items-center gap-1 border-b-2 border-[#c4c7ca] pt-0.5 pl-1">
        <svg viewBox="0 0 10 12" className="h-3 w-[10px] shrink-0" fill="#3d94dc">
          <path d="M3 0H7V5.4H10L5 11.8L0 5.4H3Z" />
        </svg>
        Downloads
      </button>
      <TaskIcon label="Zalo">
        <span className="ml-1.5 flex h-3 w-3 items-center justify-center rounded-full bg-[#e6f1fb] text-[5px] font-bold text-[#1a73d8]">Zalo</span>
      </TaskIcon>
      <button type="button" className="ml-[7px] flex w-[111px] items-center gap-1 border-b-2 border-[#c4c7ca] pt-0.5 pl-[3px] whitespace-nowrap">
        <svg viewBox="0 0 12 12" className="h-3 w-3 shrink-0">
          <circle cx="6" cy="6" r="5.6" fill="#7fbf4d" />
          <path d="M6 0.6A5.4 5.4 0 0 0 1 8Q4 8 6 4Z" fill="#dff0c8" />
          <circle cx="6.4" cy="6" r="2.4" fill="#fff" />
          <path d="M6.4 6L11.4 11.4H8Z" fill="#3a3f45" />
        </svg>
        Hoidap247.com - Hỏi...
      </button>
      <button type="button" className="ml-1 flex w-[117px] items-center gap-1 border-b-2 border-[#c4c7ca] bg-[#2c3137] pt-0.5 pl-1.5 whitespace-nowrap">
        <svg viewBox="0 0 11 10" className="h-[10px] w-[11px] shrink-0">
          <path d="M5 1H10.5V9H5Z" fill="#fff" />
          <path d="M7 2.5H10M7 4.2H10M7 5.9H10M7 7.6H10" stroke="#2b579a" strokeWidth="0.6" />
          <path d="M0 1L7 0V10L0 9Z" fill="#2b66b5" />
          <path d="M1.4 3.4L2.4 6.8L3.5 3.6L4.6 6.8L5.6 3.4" fill="none" stroke="#fff" strokeWidth="0.8" />
        </svg>
        ÔN TẬP CỘNG - TRỪ...
      </button>
      <div className="ml-auto flex items-center">
        <button type="button" aria-label="Show hidden icons" className="flex w-[17px] justify-center"><ChevronUp size={12} strokeWidth={2.2} /></button>
        <span className="flex w-[17px] justify-center">
          <span className="flex h-3 w-3 items-center justify-center bg-[#f3e3e2] text-[10px] leading-none font-bold text-[#c4262e]">V</span>
        </span>
        <span className="flex w-[18px] justify-center">
          <svg viewBox="0 0 12 10" className="h-[10px] w-3" fill="none" stroke="#fff">
            <path d="M0.8 3.4H2.6L5.4 0.8V9.2L2.6 6.6H0.8ZM7.6 3.2L11.2 6.8M11.2 3.2L7.6 6.8" />
          </svg>
        </span>
        <span className="flex w-[19px] justify-center">
          <svg viewBox="0 0 12 7" className="h-[7px] w-3" fill="none" stroke="#fff">
            <path d="M0.5 0.5H10V6.5H0.5ZM11.4 2.2V4.8" />
            <path d="M2 2H4.4V5H2Z" fill="#fff" />
          </svg>
        </span>
        <span className="flex w-[17px] justify-center">
          <svg viewBox="0 0 11 11" className="h-[11px] w-[11px]" fill="none" stroke="#ccc">
            <path d="M1 9A8.4 8.4 0 0 1 9.6 1M3.4 9.6A6 6 0 0 1 10 3.8M5.8 10A3.6 3.6 0 0 1 10.2 6.6" />
            <circle cx="8.8" cy="9.2" r="1" fill="#fff" />
          </svg>
        </span>
        <span className="flex w-[22px] justify-center">
          <svg viewBox="0 0 17 10" className="h-[10px] w-[17px]" fill="none" stroke="#ddd">
            <path d="M0.5 0.5H16.5V9.5H0.5Z" />
            <path d="M2.5 3H14.5M2.5 5H14.5" strokeDasharray="1.6 0.8" />
            <path d="M4 7.2H13" />
          </svg>
        </span>
        <span className="w-[30px] text-center">VIE</span>
        <span className="w-[39px] text-center whitespace-nowrap">8:33 CH</span>
        <button type="button" aria-label="Notifications" className="flex w-[38px] justify-center">
          <svg viewBox="0 0 12 12" className="h-3 w-3" fill="none" stroke="#fff" strokeWidth="1.1">
            <path d="M0.8 0.8H11.2V8.6H8.4V11L5.8 8.6H0.8Z" />
          </svg>
        </button>
        <span className="w-1" />
      </div>
    </div>
  );
}

export default function App() {
  return (
    <div className="flex h-screen flex-col bg-black pr-[30px] font-['Roboto','Open_Sans',sans-serif]">
      <div className="flex min-h-0 flex-1 flex-col border-2 border-[#dc622b] bg-[#e6e6e6]">
        <TitleBar />
        <TabRow />
        <div className="flex h-[69px] border-b border-[#d0d0d0] bg-[#f3f3f3] pb-0.5 text-[9px] text-[#444]">
          <Clipboard />
          <FontGroup />
          <Paragraph />
          <Styles />
          <Editing />
          <button type="button" aria-label="Collapse the ribbon" className="ml-auto flex w-5 items-end justify-center pb-px">
            <ChevronUp size={9} strokeWidth={2.5} />
          </button>
        </div>
        <Ruler />
        <Document />
        <StatusBar />
      </div>
      <Taskbar />
    </div>
  );
}
